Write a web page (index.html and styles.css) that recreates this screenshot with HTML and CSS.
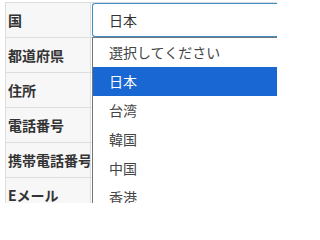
FILE: index.html
```html
<!DOCTYPE html>
<html lang="ja">
<head>
<meta charset="utf-8">
<link rel="stylesheet" href="styles.css">
</head>
<body>
<table class="form">
  <tr>
    <th>国</th>
    <td class="select-cell">
      <div class="select">日本</div>
      <ul class="dropdown">
        <li>選択してください</li>
        <li class="active">日本</li>
        <li>台湾</li>
        <li>韓国</li>
        <li>中国</li>
        <li>香港</li>
      </ul>
    </td>
  </tr>
  <tr><th>都道府県</th><td></td></tr>
  <tr><th>住所</th><td></td></tr>
  <tr><th>電話番号</th><td></td></tr>
  <tr><th>携帯電話番号</th><td></td></tr>
  <tr><th>Eメール</th><td></td></tr>
</table>
</body>
</html>
```
FILE: styles.css
```css
html, body {
  margin: 0;
  padding: 0;
  background: #fff;
  width: 277px;
  height: 203px;
  overflow: hidden;
}
body {
  font-family: "Noto Sans CJK JP", "Noto Sans", sans-serif;
  color: #333;
}
.form {
  border-collapse: collapse;
  margin: 2px 0 0 5px;
  width: 274px;
  table-layout: fixed;
}
.form th, .form td {
  border: 1px solid #dddddd;
  height: 34px;
  padding: 0;
  box-sizing: border-box;
}
.form tr { height: 35px; }
.form th {
  width: 85px;
  background: #f7f7f7;
  font-weight: bold;
  font-size: 14px;
  text-align: left;
  padding-left: 2px;
  white-space: nowrap;
  overflow: hidden;
  color: #333;
}
.form td { background: #fff; }
.select-cell {
  position: relative;
  vertical-align: top;
}
.select {
  box-sizing: border-box;
  height: 34px;
  margin-left: 1px;
  border: 1px solid #3d8ec6;
  border-right: none;
  border-radius: 3px 0 0 3px;
  padding-left: 16px;
  font-size: 14px;
  line-height: 32px;
  color: #333;
  background: #fff;
}
.dropdown {
  position: absolute;
  top: 34px;
  left: 1px;
  right: 0;
  margin: 0;
  padding: 0;
  list-style: none;
  background: #fff;
  border-top: 1px solid #767676;
  border-left: 1px solid #767676;
  z-index: 2;
}
.dropdown li {
  height: 29px;
  line-height: 29px;
  padding-left: 16px;
  font-size: 14px;
  color: #444;
}
.dropdown li.active {
  background: #1967d2;
  color: #fff;
}
```
